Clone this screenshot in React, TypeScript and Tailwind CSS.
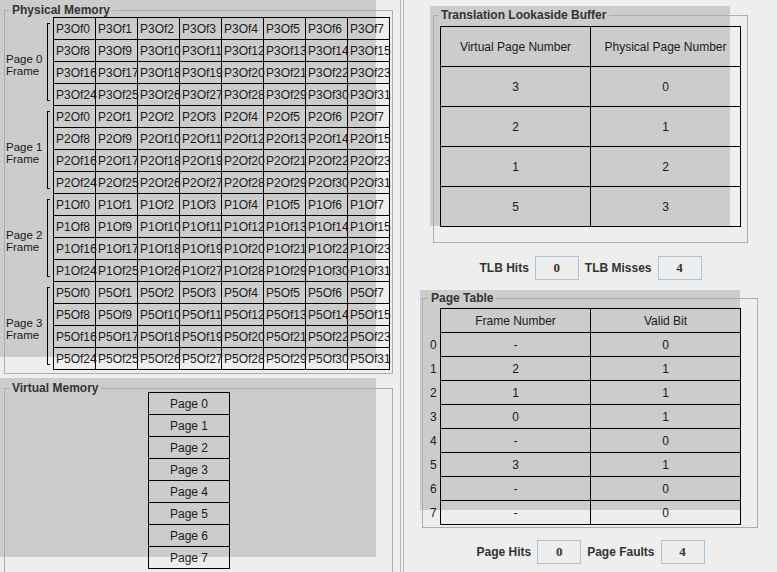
import React from 'react';

// physical memory frames: which virtual page sits in each frame
const frames = [
  { label: 'Page 0', page: 'P3' },
  { label: 'Page 1', page: 'P2' },
  { label: 'Page 2', page: 'P1' },
  { label: 'Page 3', page: 'P5' },
];

const tlb = [
  ['3', '0'],
  ['2', '1'],
  ['1', '2'],
  ['5', '3'],
];

const pageTable = [
  ['-', '0'],
  ['2', '1'],
  ['1', '1'],
  ['0', '1'],
  ['-', '0'],
  ['3', '1'],
  ['-', '0'],
  ['-', '0'],
];

const font = "font-['Liberation_Sans',Arial,sans-serif]";

const Legend = ({ title, className = '' }: { title: string; className?: string }) => (
  <legend className={`px-[3px] text-[12px] leading-[14px] font-bold text-[#333333] ${className}`}>{title}</legend>
);

const Counter = ({ label, value }: { label: string; value: string }) => (
  <>
    <span className="text-[12px] font-bold text-[#333333]">{label}</span>
    <div className="w-[44px] h-[24px] border border-[#a8c4dd] flex items-center justify-center text-[13px] font-bold text-[#333333] font-['Liberation_Serif',serif]">
      {value}
    </div>
  </>
);

export default function App() {
  return (
    <div className={`w-[777px] h-[572px] bg-[#eeeeee] flex overflow-hidden ${font}`}>
      {/* left side */}
      <div className="relative w-[400px] h-full pt-[3px] pl-[4px]">
        <div className="absolute left-0 top-0 w-[376px] h-[357px] bg-[#cccccc]" />
        <div className="absolute left-0 top-[378px] w-[376px] h-[179px] bg-[#cccccc]" />

        <fieldset className="relative w-[389px] h-[371px] border border-[#adadad]">
          <Legend title="Physical Memory" className="ml-[4px]" />
          <div className="flex">
            <div className="w-[48px] pt-[1px]">
              {frames.map((f) => (
                <div key={f.label} className="h-[88px] flex items-center">
                  <div className="w-[41px] ml-[1px] pt-[5px] text-[11.5px] leading-[12px] text-[#1a1a1a]">
                    <div className="h-[12px]">{f.label}</div>
                    <div className="h-[12px]">Frame</div>
                  </div>
                  <div className="w-[3px] h-[78px] border-l border-y border-black" />
                </div>
              ))}
            </div>
            <div className="grid grid-cols-[repeat(8,42px)] border-l border-t border-black">
              {frames.map((f) =>
                Array.from({ length: 32 }, (_, i) => (
                  <div
                    key={f.page + i}
                    className="h-[22px] border-r border-b border-black pl-[2px] flex items-center text-[12px] text-[#1a1a1a] whitespace-nowrap"
                  >
                    {f.page}Of{i}
                  </div>
                ))
              )}
            </div>
          </div>
        </fieldset>

        <fieldset className="relative mt-[7px] w-[389px] h-[195px] border border-[#adadad]">
          <Legend title="Virtual Memory" className="ml-[4px]" />
          <div className="-mt-[3px] ml-[143px] w-[82px] border-l border-t border-black">
            {Array.from({ length: 8 }, (_, i) => (
              <div key={i} className="h-[22px] border-r border-b border-black flex items-center justify-center text-[12px] text-[#1a1a1a]">
                Page {i}
              </div>
            ))}
          </div>
        </fieldset>
      </div>

      {/* split divider */}
      <div className="w-[4px] h-full border-l border-r border-[#b8b8b8]" />

      {/* right side */}
      <div className="relative flex-1 h-full flex flex-col">
        <div className="absolute left-[26px] top-[6px] w-[300px] h-[220px] bg-[#cccccc]" />
        <div className="absolute left-[16px] top-[290px] w-[320px] h-[220px] bg-[#cccccc]" />

        <fieldset className="relative mt-[8px] ml-[29px] w-[315px] h-[235px] border border-[#adadad]">
          <Legend title="Translation Lookaside Buffer" className="ml-[4px]" />
          <div className="mt-[4px] ml-[6px] w-[301px] grid grid-cols-[150px_150px] border-l border-t border-black text-[12px] text-[#1a1a1a]">
            <div className="h-[40px] border-r border-b border-black flex items-center justify-center">Virtual Page Number</div>
            <div className="h-[40px] border-r border-b border-black flex items-center justify-center">Physical Page Number</div>
            {tlb.map(([v, p], i) => (
              <React.Fragment key={i}>
                <div className="h-[40px] border-r border-b border-black flex items-center justify-center">{v}</div>
                <div className="h-[40px] border-r border-b border-black flex items-center justify-center">{p}</div>
              </React.Fragment>
            ))}
          </div>
        </fieldset>

        <div className="relative mt-[13px] h-[24px] flex items-center justify-center gap-[6px]">
          <Counter label="TLB Hits" value="0" />
          <Counter label="TLB Misses" value="4" />
        </div>

        <fieldset className="relative mt-[11px] ml-[18px] w-[336px] h-[237px] border border-[#adadad]">
          <Legend title="Page Table" className="ml-[5px]" />
          <div className="mt-[3px] flex text-[12px] text-[#1a1a1a]">
            <div className="w-[17px] pt-[25px]">
              {pageTable.map((_, i) => (
                <div key={i} className="h-[24px] pl-[7px] flex items-center">{i}</div>
              ))}
            </div>
            <div className="w-[301px] grid grid-cols-[150px_150px] border-l border-t border-black">
              <div className="h-[24px] border-r border-b border-black flex items-center justify-center">Frame Number</div>
              <div className="h-[24px] border-r border-b border-black flex items-center justify-center">Valid Bit</div>
              {pageTable.map(([f, v], i) => (
                <React.Fragment key={i}>
                  <div className="h-[24px] border-r border-b border-black flex items-center justify-center">{f}</div>
                  <div className="h-[24px] border-r border-b border-black flex items-center justify-center">{v}</div>
                </React.Fragment>
              ))}
            </div>
          </div>
        </fieldset>

        <div className="relative mt-[12px] h-[24px] flex items-center justify-center gap-[6px]">
          <Counter label="Page Hits" value="0" />
          <Counter label="Page Faults" value="4" />
        </div>
      </div>
    </div>
  );
}
